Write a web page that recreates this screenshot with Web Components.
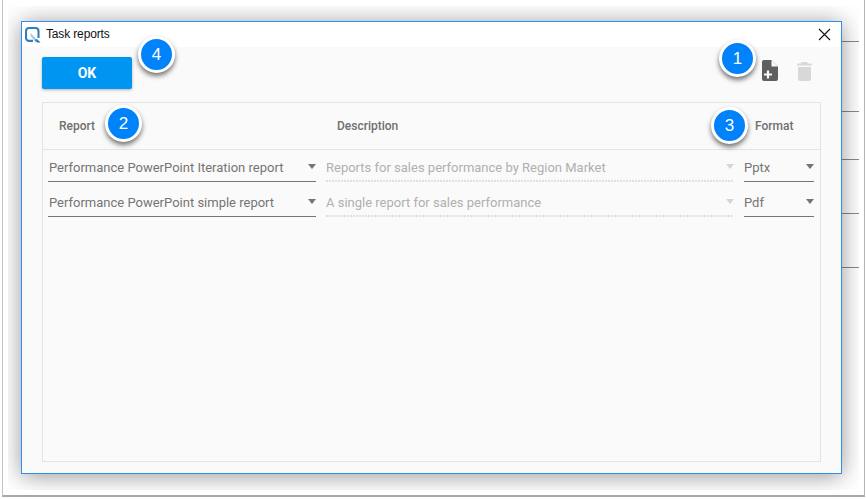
<!DOCTYPE html>
<html>
<head>
<meta charset="utf-8">
<title>Task reports</title>
<style>
  html, body { margin: 0; padding: 0; background: #fff; }
  body { width: 866px; height: 499px; overflow: hidden; font-family: Roboto, sans-serif; }
</style>
</head>
<body>
<shot-frame>
  <task-dialog heading="Task reports">
    <report-row report="Performance PowerPoint Iteration report" description="Reports for sales performance by Region Market" format="Pptx"></report-row>
    <report-row report="Performance PowerPoint simple report" description="A single report for sales performance" format="Pdf"></report-row>
  </task-dialog>
</shot-frame>

<script>
class ShotFrame extends HTMLElement {
    connectedCallback() {
        this.attachShadow({ mode: 'open' });
        this.shadowRoot.innerHTML = `
            <style>
                :host {
                    display: block;
                    box-sizing: border-box;
                    width: 863px;
                    height: 497px;
                    margin-left: 2px;
                    padding: 6px 5px 5px 5px;
                    background: #fff;
                    border-left: 1px solid #c4c4c4;
                    border-right: 1px solid #b4b4b4;
                    border-bottom: 2px solid #a8a8a8;
                }
                .desk {
                    height: 100%;
                    box-sizing: border-box;
                    padding: 15px 17px 16px 13px;
                    overflow: hidden;
                    background:
                        linear-gradient(#8a8a8a, #8a8a8a) right 0 top 35px / 18px 1px no-repeat,
                        linear-gradient(#8a8a8a, #8a8a8a) right 0 top 105px / 18px 1px no-repeat,
                        linear-gradient(#8a8a8a, #8a8a8a) right 0 top 153px / 18px 1px no-repeat,
                        linear-gradient(#8a8a8a, #8a8a8a) right 0 top 207px / 18px 1px no-repeat,
                        linear-gradient(#8a8a8a, #8a8a8a) right 0 top 261px / 18px 1px no-repeat,
                        #fff;
                }
            </style>
            <div class="desk"><slot></slot></div>
        `;
    }
}

class TaskDialog extends HTMLElement {
    connectedCallback() {
        this.attachShadow({ mode: 'open' });
        this.shadowRoot.innerHTML = `
            <style>
                :host {
                    display: flex;
                    flex-direction: column;
                    position: relative;
                    box-sizing: border-box;
                    height: 100%;
                    background: #fafafa;
                    border: 1px solid #2f8ff0;
                    box-shadow: 0 2px 22px rgba(0, 0, 0, 0.42);
                }
                .title {
                    display: flex;
                    align-items: center;
                    height: 25px;
                    flex: none;
                    background: #fff;
                    padding-left: 3px;
                    font: 12px "Liberation Sans", sans-serif;
                    letter-spacing: -0.15px;
                    color: #111;
                }
                .title svg.logo { margin-right: 5px; }
                .title span { flex: 1; padding-bottom: 2px; }
                .title svg.close { margin-right: 10px; }
                .toolbar {
                    display: flex;
                    align-items: flex-start;
                    height: 55px;
                    flex: none;
                    padding: 10px 29px 0 20px;
                    box-sizing: border-box;
                }
                button {
                    width: 90px;
                    height: 32px;
                    border: 0;
                    border-radius: 2px;
                    background: #0095f0;
                    color: #fff;
                    font: 700 14px Roboto, sans-serif;
                    box-shadow: 0 1px 3px rgba(0, 0, 0, 0.3);
                }
                .tools {
                    margin-left: auto;
                    display: flex;
                    gap: 19px;
                    padding-top: 3px;
                }
                .panel {
                    flex: 1;
                    display: flex;
                    flex-direction: column;
                    margin: 0 20px 11px 20px;
                    border: 1px solid #e4e4e4;
                }
                .head {
                    display: grid;
                    grid-template-columns: 268px 408px 70px;
                    column-gap: 10px;
                    align-items: center;
                    height: 46px;
                    padding: 0 5px;
                    border-bottom: 1px solid #e4e4e4;
                    font: 500 12px Roboto, sans-serif;
                    color: #6f6f6f;
                    flex: none;
                }
                .head span { padding-left: 11px; }
                .badge {
                    position: absolute;
                    box-sizing: border-box;
                    width: 37px;
                    height: 37px;
                    border: 3px solid #fff;
                    border-radius: 50%;
                    background: #0082fb;
                    color: #fff;
                    display: flex;
                    align-items: center;
                    justify-content: center;
                    font: 17px "Liberation Sans", sans-serif;
                    box-shadow: 0 3px 5px rgba(0, 0, 0, 0.55);
                }
            </style>
            <div class="title">
                <svg class="logo" width="16" height="16" viewBox="0 0 16 16">
                    <path d="M8 13.9 H4 a3 3 0 0 1 -3 -3 V4 a3 3 0 0 1 3 -3 H10.5 a3 3 0 0 1 3 3 V11" fill="none" stroke="#2f7fbf" stroke-width="2.1"/>
                    <path d="M5.5 6 L12.5 13 L15.5 15.6 L11 15.6 L5.5 9 Z" fill="#a9c9e4"/>
                    <path d="M9.5 13 L12.5 15.6 H15.5 L12 12 Z" fill="#2f7fbf"/>
                </svg>
                <span>${this.getAttribute('heading')}</span>
                <svg class="close" width="13" height="13" viewBox="0 0 13 13">
                    <path d="M1 1 L12 12 M12 1 L1 12" stroke="#111" stroke-width="1.1" fill="none"/>
                </svg>
            </div>
            <div class="toolbar">
                <button>OK</button>
                <div class="tools">
                    <svg width="17" height="21" viewBox="0 0 17 21">
                        <path d="M2.5 0 H10.5 L17 6.5 V19 a2 2 0 0 1 -2 2 H3 a2 2 0 0 1 -2 -2 V2 a2 2 0 0 1 1.5 -2 Z" fill="#5f5f5f"/>
                        <path d="M10.5 0 V6.5 H17 Z" fill="#fafafa"/>
                        <path d="M7 10.5 V18.5 M3 14.5 H11" stroke="#fafafa" stroke-width="2.2"/>
                    </svg>
                    <svg width="15" height="19" viewBox="0 0 15 19" style="margin-top:2px">
                        <path d="M5 0 H10 L11 1.5 H14 a1 1 0 0 1 1 1 V3.5 H0 V2.5 a1 1 0 0 1 1 -1 H4 Z" fill="#d8d8d8"/>
                        <path d="M1 5 H14 V17 a2 2 0 0 1 -2 2 H3 a2 2 0 0 1 -2 -2 Z" fill="#d8d8d8"/>
                    </svg>
                </div>
            </div>
            <div class="panel">
                <div class="head">
                    <span>Report</span>
                    <span>Description</span>
                    <span>Format</span>
                </div>
                <div><slot></slot></div>
            </div>
            <div class="badge" style="left:697px;top:18px">1</div>
            <div class="badge" style="left:83px;top:83px">2</div>
            <div class="badge" style="left:689px;top:85px">3</div>
            <div class="badge" style="left:116px;top:14px">4</div>
        `;
    }
}

class ReportRow extends HTMLElement {
    connectedCallback() {
        this.attachShadow({ mode: 'open' });
        this.shadowRoot.innerHTML = `
            <style>
                :host {
                    display: grid;
                    grid-template-columns: 268px 408px 70px;
                    column-gap: 10px;
                    padding: 0 5px;
                    height: 35px;
                    box-sizing: border-box;
                }
            </style>
            <report-select>${this.getAttribute('report')}</report-select>
            <report-select disabled>${this.getAttribute('description')}</report-select>
            <report-select flush>${this.getAttribute('format')}</report-select>
        `;
    }
}

class ReportSelect extends HTMLElement {
    connectedCallback() {
        this.attachShadow({ mode: 'open' });
        this.shadowRoot.innerHTML = `
            <style>
                :host {
                    display: flex;
                    align-items: center;
                    box-sizing: border-box;
                    height: 32px;
                    padding: 4px 0 0 1px;
                    font: 13px Roboto, sans-serif;
                    color: #757575;
                    border-bottom: 1px solid #757575;
                }
                :host([flush]) { padding-left: 0; }
                :host([disabled]) {
                    color: #b0b0b0;
                    border-bottom: 0;
                    padding: 4px 0 1px 0;
                    background: repeating-linear-gradient(90deg, #e0e0e0 0 2px, transparent 2px 3px) left bottom / 100% 2px no-repeat;
                }
                span { flex: 1; white-space: nowrap; }
                i {
                    width: 0;
                    height: 0;
                    border-left: 4.5px solid transparent;
                    border-right: 4.5px solid transparent;
                    border-top: 5px solid #757575;
                    margin-bottom: 3px;
                }
                :host([disabled]) i { border-top-color: #d6d6d6; }
            </style>
            <span><slot></slot></span><i></i>
        `;
    }
}

customElements.define('shot-frame', ShotFrame);
customElements.define('task-dialog', TaskDialog);
customElements.define('report-row', ReportRow);
customElements.define('report-select', ReportSelect);
</script>
</body>
</html>
